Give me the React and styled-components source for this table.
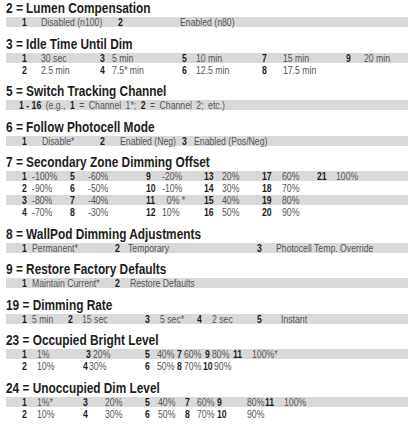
import React from 'react';
import styled, { createGlobalStyle } from 'styled-components';

const GlobalStyle = createGlobalStyle`
  html, body {
    margin: 0;
    padding: 0;
    background: #fff;
  }
  body {
    font-family: "Liberation Sans", Arial, sans-serif;
  }
`;

// the print uses a narrow grotesque; Liberation Sans squeezed horizontally gives Arial Narrow widths
const narrow = (k) => `
  display: block;
  transform: scaleX(${k});
  transform-origin: 0 50%;
`;

const Page = styled.div`
  width: 408px;
  padding-left: 6px;
  box-sizing: border-box;
`;

const Section = styled.section`
  & + & {
    margin-top: 7.5px;
  }
`;

const Title = styled.h2`
  ${narrow(0.79)}
  margin: 0;
  height: 16px;
  line-height: 16px;
  font-size: 15px;
  font-weight: 700;
  color: #1d1d1b;
  white-space: nowrap;
`;

const Row = styled.div`
  display: grid;
  grid-template-columns: ${(p) => p.$tracks};
  padding-left: ${(p) => p.$indent}px;
  height: 12px;
  line-height: 12px;
  font-size: 10.6px;
  white-space: nowrap;
  background: ${(p) =>
    p.$shade
      ? 'linear-gradient(to bottom, transparent 1px, #d9d9d9 1px, #d9d9d9 11px, transparent 11px)'
      : 'none'};
`;

const Num = styled.span`
  ${narrow(0.82)}
  font-weight: 700;
  color: #1d1d1b;
`;

const Label = styled.span`
  ${narrow(0.82)}
  color: #555;
`;

const Free = styled.span`
  ${narrow(0.82)}
  color: #555;
  word-spacing: 2.5px;

  b {
    font-weight: 700;
    color: #1d1d1b;
    word-spacing: 0;
  }
`;

const sections = [
  {
    title: '2 = Lumen Compensation',
    cols: [22, 41, 118, 180],
    rows: [[['1', 'Disabled (n100)'], ['2', 'Enabled (n80)']]],
  },
  {
    title: '3 = Idle Time Until Dim',
    cols: [22, 41, 100, 112, 182, 196, 262, 283, 346, 364],
    rows: [
      [['1', '30 sec'], ['3', '5 min'], ['5', '10 min'], ['7', '15 min'], ['9', '20 min']],
      [['2', '2.5 min'], ['4', '7.5* min'], ['6', '12.5 min'], ['8', '17.5 min']],
    ],
  },
  { title: '5 = Switch Tracking Channel', free: true },
  {
    title: '6 = Follow Photocell Mode',
    cols: [22, 42, 100, 120, 182, 194],
    rows: [[['1', 'Disable*'], ['2', 'Enabled (Neg)'], ['3', 'Enabled (Pos/Neg)']]],
  },
  {
    title: '7 = Secondary Zone Dimming Offset',
    cols: [22, 32, 70, 88, 146, 162, 204, 222, 262, 282, 317, 336],
    rows: [
      [['1', '-100%'], ['5', '-60%'], ['9', '-20%'], ['13', '20%'], ['17', '60%'], ['21', '100%']],
      [['2', '-90%'], ['6', '-50%'], ['10', '-10%'], ['14', '30%'], ['18', '70%']],
      [['3', '-80%'], ['7', '-40%'], ['11', '\u00a0\u00a00% *'], ['15', '40%'], ['19', '80%']],
      [['4', '-70%'], ['8', '-30%'], ['12', '10%'], ['16', '50%'], ['20', '90%']],
    ],
  },
  {
    title: '8 = WallPod Dimming Adjustments',
    cols: [22, 32, 115, 128, 257, 276],
    rows: [[['1', 'Permanent*'], ['2', 'Temporary'], ['3', 'Photocell Temp. Override']]],
  },
  {
    title: '9 = Restore Factory Defaults',
    cols: [22, 32, 115, 130],
    rows: [[['1', 'Maintain Current*'], ['2', 'Restore Defaults']]],
  },
  {
    title: '19 = Dimming Rate',
    cols: [22, 32, 68, 82, 145, 160, 197, 212, 257, 281],
    rows: [[['1', '5 min'], ['2', '15 sec'], ['3', '5 sec*'], ['4', '2 sec'], ['5', 'Instant']]],
  },
  {
    title: '23 = Occupied Bright Level',
    rows: [
      {
        cols: [22, 37, 86, 93, 145, 157, 177, 184, 205, 212, 233, 252],
        cells: [['1', '1%'], ['3', '20%'], ['5', '40%'], ['7', '60%'], ['9', '80%'], ['11', '100%*']],
      },
      {
        cols: [22, 37, 83, 89, 145, 157, 177, 184, 203, 214],
        cells: [['2', '10%'], ['4', '30%'], ['6', '50%'], ['8', '70%'], ['10', '90%']],
      },
    ],
  },
  {
    title: '24 = Unoccupied Dim Level',
    cols: [22, 37, 83, 105, 145, 158, 185, 197, 217, 247, 265, 284],
    rows: [
      [['1', '1%*'], ['3', '20%'], ['5', '40%'], ['7', '60%'], ['9', '80%'], ['11', '100%']],
      [['2', '10%'], ['4', '30%'], ['6', '50%'], ['8', '70%'], ['10', '90%']],
    ],
  },
];

const tracksFor = (cols) =>
  cols
    .map((c, i) => (i < cols.length - 1 ? `${cols[i + 1] - c}px` : '1fr'))
    .join(' ');

const OptionRow = ({ cols, cells, shade }) => (
  <Row $tracks={tracksFor(cols)} $indent={cols[0] - 6} $shade={shade}>
    {cells.map(([n, l]) => (
      <React.Fragment key={n}>
        <Num>{n}</Num>
        <Label>{l}</Label>
      </React.Fragment>
    ))}
  </Row>
);

export default function App() {
  return (
    <>
      <GlobalStyle />
      <Page>
        {sections.map((s) => (
          <Section key={s.title}>
            <Title>{s.title}</Title>
            {s.free ? (
              <Row $tracks="1fr" $indent={13} $shade>
                <Free>
                  <b>1 - 16</b> (e.g., <b>1</b> = Channel 1*; <b>2</b> = Channel 2; etc.)
                </Free>
              </Row>
            ) : (
              s.rows.map((r, i) => {
                const cols = r.cols || s.cols;
                const cells = r.cells || r;
                return <OptionRow key={i} cols={cols} cells={cells} shade={i % 2 === 0} />;
              })
            )}
          </Section>
        ))}
      </Page>
    </>
  );
}
